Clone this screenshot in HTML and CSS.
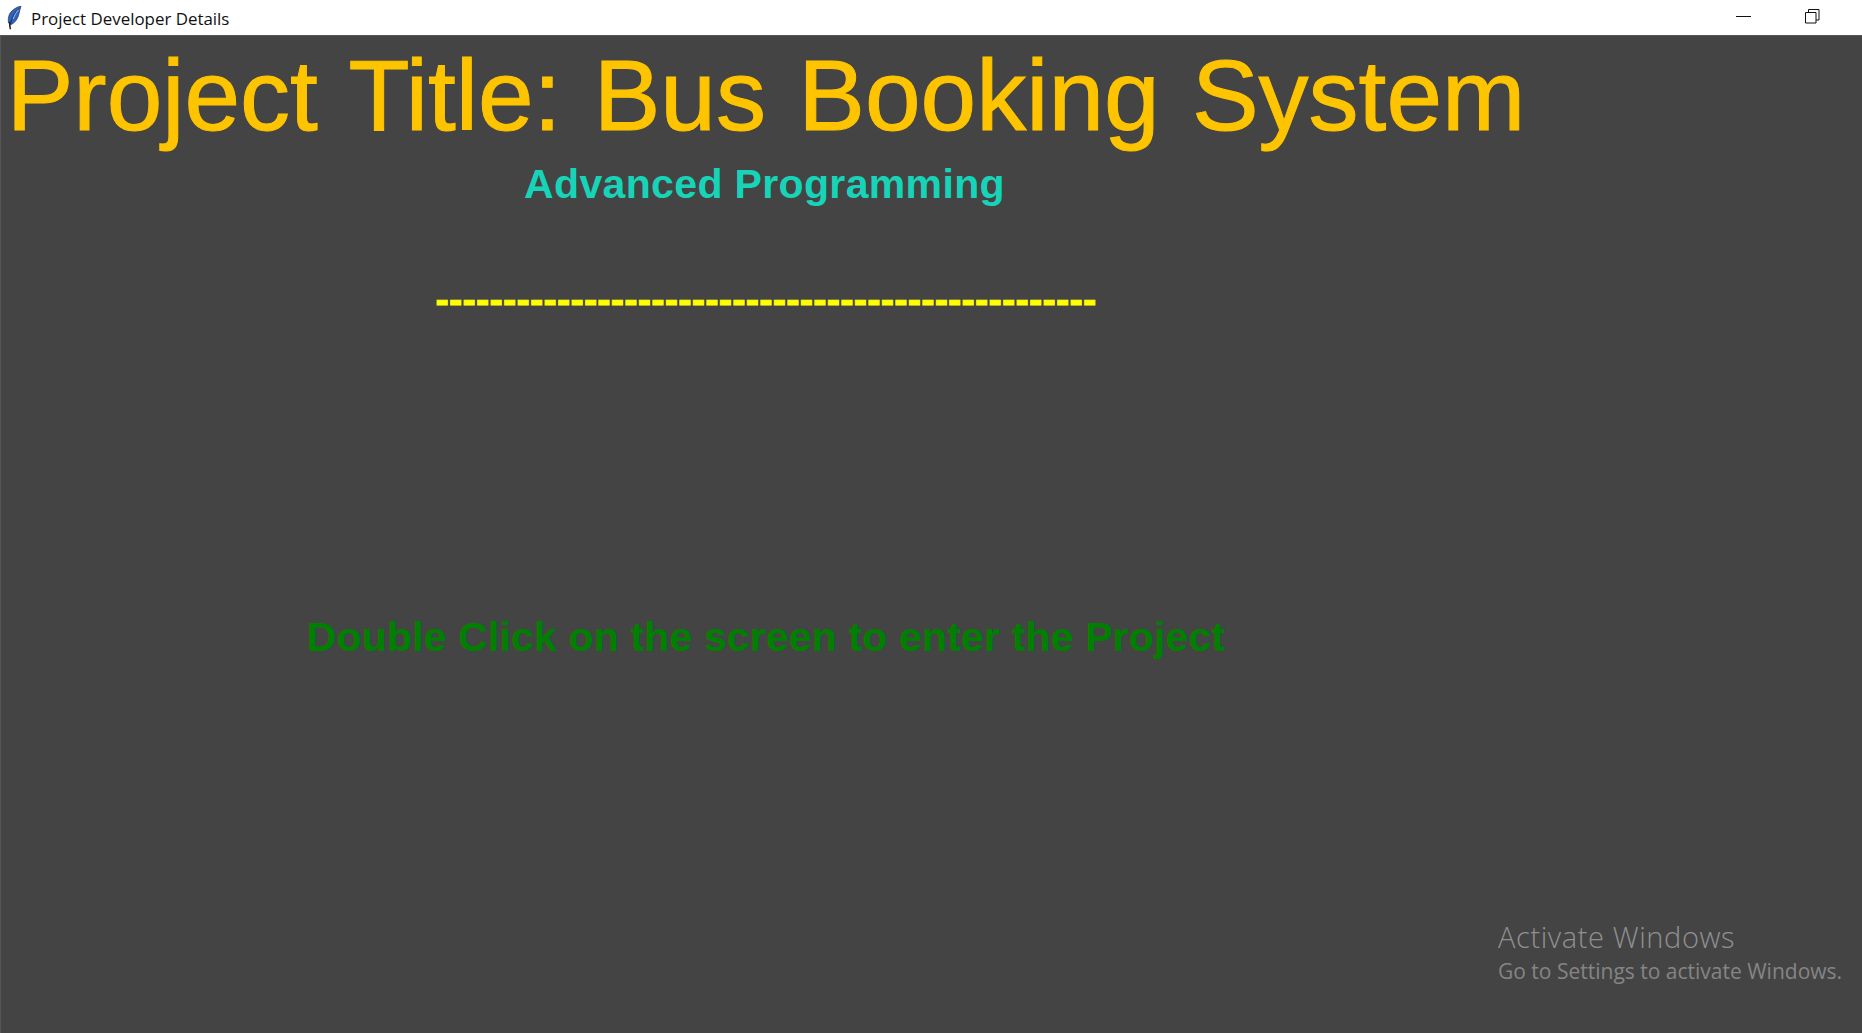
FILE: index.html
```html
<!DOCTYPE html>
<html lang="en">
<head>
    <meta charset="UTF-8">
    <title>Project Developer Details</title>
    <link rel="stylesheet" href="styles.css">
</head>
<body>
    <header class="titlebar">
        <div class="titlebar-left">
            <svg class="feather" width="16" height="24" viewBox="0 0 16 24">
                <path d="M15 0C11 1 6 3.500 3.500 8 2.300 11 2 14 2.500 17l2.500 1.500C8 17.500 11 14 12.500 9.500 13.500 6 14 3 15 0z" fill="#2f63bd" stroke="#24365c" stroke-width=".7"/>
                <path d="M12.500 3.500C9.500 6.500 8 9.500 7 13" stroke="#8fb6ec" stroke-width="1.200" fill="none"/>
                <path d="M13 2.500C9 6 6 11 4.800 17" stroke="#17233f" stroke-width=".7" fill="none"/>
                <path d="M3.200 15.500c-.5 3-.2 5.500.6 8l1.400-.5c-.6-2-.7-4-.2-6.500z" fill="#1d2430"/>
            </svg>
            <span class="window-title">Project Developer Details</span>
        </div>
        <div class="window-controls">
            <svg width="16" height="16" viewBox="0 0 16 16"><path d="M0 8.500h15" stroke="#111" fill="none"/></svg>
            <svg width="16" height="16" viewBox="0 0 16 16"><path d="M1.500 4.500h10.500v10.500h-10.500zM4.500 4.500v-3h10.500v10.500h-3" stroke="#111" fill="none"/></svg>
        </div>
    </header>
    <main class="content">
        <div class="center-col">
            <h1 class="project-title">Project Title: Bus Booking System</h1>
            <h2 class="course">Advanced Programming</h2>
            <div class="dashes">-------------------------------------------------</div>
            <p class="hint">Double Click on the screen to enter the Project</p>
        </div>
        <div class="watermark">
            <div class="wm-big">Activate Windows</div>
            <div class="wm-small">Go to Settings to activate Windows.</div>
        </div>
    </main>
</body>
</html>
```

FILE: styles.css
```css
html, body {
    margin: 0;
    height: 100%;
    overflow: hidden;
}
body {
    display: flex;
    flex-direction: column;
    font-family: "Liberation Sans", Arial, sans-serif;
    background-color: #444444;
}
.titlebar {
    height: 36px;
    box-sizing: border-box;
    background-color: #fff;
    border-bottom: 1px solid #555;
    display: flex;
    justify-content: space-between;
    align-items: center;
    flex-shrink: 0;
}
.titlebar-left {
    display: flex;
    align-items: center;
    padding-left: 6px;
}
.window-title {
    font-family: "Open Sans", "Noto Sans", sans-serif;
    font-size: 16.900px;
    color: #111;
    margin-left: 9px;
    padding-top: 2px;
}
.window-controls {
    display: flex;
    gap: 52px;
    padding-right: 42px;
    padding-bottom: 3px;
}
.content {
    flex: 1;
    position: relative;
    background-color: #444444;
    border-left: 1px solid #555;
}
.center-col {
    width: 1530px;
    text-align: center;
}
.project-title {
    margin: 0;
    padding-top: 4px;
    padding-bottom: 1px;
    font-size: 100px;
    line-height: 110px;
    word-spacing: 4.500px;
    font-weight: normal;
    color: #ffc400;
    -webkit-text-stroke: 1px #ffc400;
    white-space: nowrap;
}
.course {
    margin: 0;
    padding-top: 10px;
    padding-right: 3px;
    font-size: 41px;
    line-height: 46px;
    letter-spacing: 0.35px;
    font-weight: bold;
    color: #17d4b8;
}
.dashes {
    padding-top: 69px;
    font-size: 40px;
    line-height: 46px;
    letter-spacing: 0.17px;
    font-weight: bold;
    color: #ffff00;
    -webkit-text-stroke: 1px #ffff00;
}
.hint {
    margin: 0;
    padding-top: 292px;
    font-size: 41px;
    line-height: 46px;
    letter-spacing: 0.15px;
    font-weight: bold;
    color: #008000;
}
.watermark {
    position: absolute;
    left: 1497px;
    top: 882px;
    color: #858585;
    font-family: "Open Sans", "Noto Sans", sans-serif;
    white-space: nowrap;
}
.wm-big {
    font-size: 29px;
    font-weight: 300;
    color: #909090;
    line-height: 37px;
    letter-spacing: 0.6px;
}
.wm-small {
    font-size: 21px;
    line-height: 33px;
}
```
